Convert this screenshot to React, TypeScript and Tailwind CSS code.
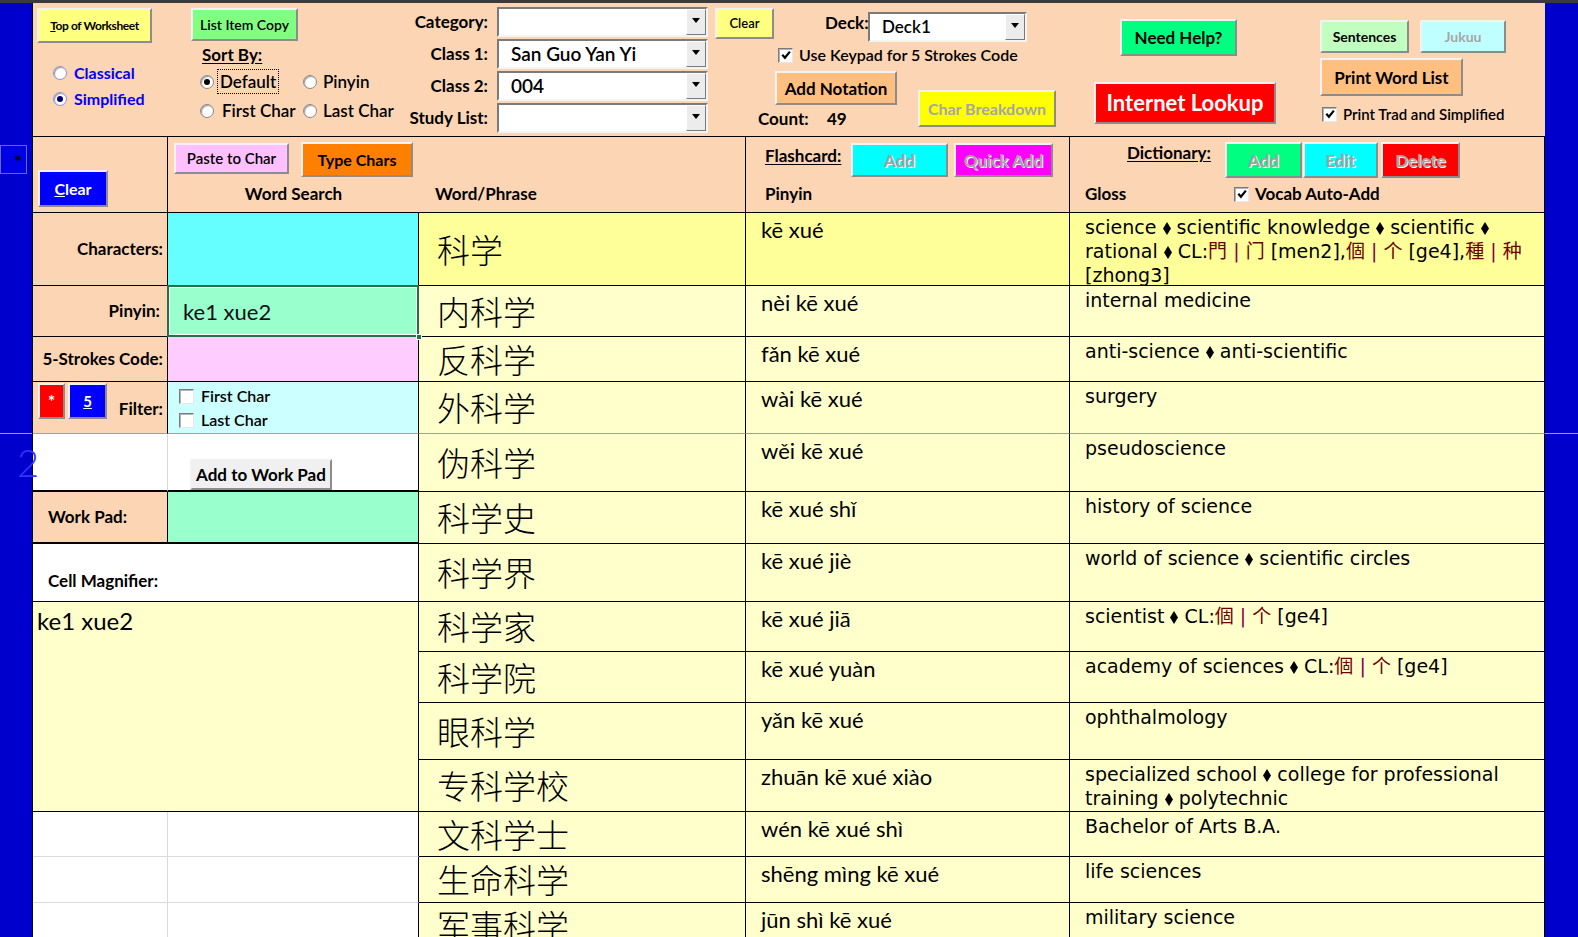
import React from 'react';

type BtnProps = { className?: string; children?: React.ReactNode };

function Btn({ className = '', children }: BtnProps) {
  return (
    <div
      className={`flex shrink-0 items-center justify-center whitespace-nowrap border-2 border-t-[#f2f2f2] border-l-[#f2f2f2] border-r-[#8c8c8c] border-b-[#8c8c8c] leading-none ${className}`}
    >
      {children}
    </div>
  );
}

function Radio({ on = false, blue = false }: { on?: boolean; blue?: boolean }) {
  return (
    <span
      className={`inline-flex h-[14px] w-[14px] shrink-0 items-center justify-center rounded-full border bg-white shadow-[inset_1px_1px_1px_rgba(0,0,0,0.4)] ${
        blue ? 'border-[#8f8fd8]' : 'border-[#8a8a8a]'
      }`}
    >
      {on && <span className={`h-[6px] w-[6px] rounded-full ${blue ? 'bg-[#00007a]' : 'bg-black'}`} />}
    </span>
  );
}

function Check({ on = false }: { on?: boolean }) {
  return (
    <span className="inline-flex h-[15px] w-[15px] shrink-0 items-center justify-center border border-t-[#7a7a7a] border-l-[#7a7a7a] border-r-[#e8e8e8] border-b-[#e8e8e8] bg-white shadow-[inset_1px_1px_0_#b4b4b4]">
      {on && (
        <svg width="10" height="10" viewBox="0 0 10 10">
          <path d="M1.3 4.8 L3.9 7.8 L8.9 1.6" fill="none" stroke="#000" strokeWidth="2.2" />
        </svg>
      )}
    </span>
  );
}

function Combo({ value = '', className = '', textClass = 'text-[19px]' }: { value?: string; className?: string; textClass?: string }) {
  return (
    <div className={`flex shrink-0 border-2 border-t-[#7a7a7a] border-l-[#7a7a7a] border-r-[#f4f4f4] border-b-[#f4f4f4] bg-white ${className}`}>
      <div className={`flex flex-1 items-center whitespace-nowrap pl-[12px] font-semibold ${textClass}`}>{value}</div>
      <div className="flex w-[20px] items-start justify-center border border-t-white border-l-white border-r-[#7a7a7a] border-b-[#7a7a7a] bg-[#ececec] pt-[8px]">
        <svg width="8" height="5" viewBox="0 0 8 5">
          <path d="M0 0H8L4 5Z" fill="#000" />
        </svg>
      </div>
    </div>
  );
}

function Diamond() {
  return (
    <svg width="8" height="13" viewBox="0 0 8 13" className="inline-block">
      <path d="M4 0L8 6.5L4 13L0 6.5Z" fill="#000" />
    </svg>
  );
}

function GlossLine({ text }: { text: string }) {
  const parts = text.split(/(♦|\||[\u4e00-\u9fff])/).filter((p) => p !== '');
  return (
    <div className="whitespace-nowrap">
      {parts.map((p, i) => {
        if (p === '♦') return <Diamond key={i} />;
        if (p === '|')
          return (
            <span key={i} className="text-[#800050]">
              |
            </span>
          );
        if (/[\u4e00-\u9fff]/.test(p))
          return (
            <span key={i} className="text-[#6e0000]">
              {p}
            </span>
          );
        return <span key={i}>{p}</span>;
      })}
    </div>
  );
}

type Row = { h: string; word: string; py: string; gloss: string[]; bb: string; bg: string };

const rows: Row[] = [
  {
    h: 'h-[73px]',
    word: '科学',
    py: 'kē xué',
    gloss: ['science ♦ scientific knowledge ♦ scientific ♦', 'rational ♦ CL:門 | 门 [men2],個 | 个 [ge4],種 | 种', '[zhong3]'],
    bb: 'border-b-black',
    bg: 'bg-[#FFFF99]',
  },
  { h: 'h-[51px]', word: '内科学', py: 'nèi kē xué', gloss: ['internal medicine'], bb: 'border-b-black', bg: 'bg-[#FFFFCC]' },
  { h: 'h-[45px]', word: '反科学', py: 'fǎn kē xué', gloss: ['anti-science ♦ anti-scientific'], bb: 'border-b-black', bg: 'bg-[#FFFFCC]' },
  { h: 'h-[52px]', word: '外科学', py: 'wài kē xué', gloss: ['surgery'], bb: 'border-b-[#a0a0a0]', bg: 'bg-[#FFFFCC]' },
  { h: 'h-[58px]', word: '伪科学', py: 'wěi kē xué', gloss: ['pseudoscience'], bb: 'border-b-black', bg: 'bg-[#FFFFCC]' },
  { h: 'h-[52px]', word: '科学史', py: 'kē xué shǐ', gloss: ['history of science'], bb: 'border-b-black', bg: 'bg-[#FFFFCC]' },
  { h: 'h-[58px]', word: '科学界', py: 'kē xué jiè', gloss: ['world of science ♦ scientific circles'], bb: 'border-b-black', bg: 'bg-[#FFFFCC]' },
  { h: 'h-[50px]', word: '科学家', py: 'kē xué jiā', gloss: ['scientist ♦ CL:個 | 个 [ge4]'], bb: 'border-b-black', bg: 'bg-[#FFFFCC]' },
  { h: 'h-[51px]', word: '科学院', py: 'kē xué yuàn', gloss: ['academy of sciences ♦ CL:個 | 个 [ge4]'], bb: 'border-b-black', bg: 'bg-[#FFFFCC]' },
  { h: 'h-[57px]', word: '眼科学', py: 'yǎn kē xué', gloss: ['ophthalmology'], bb: 'border-b-black', bg: 'bg-[#FFFFCC]' },
  {
    h: 'h-[52px]',
    word: '专科学校',
    py: 'zhuān kē xué xiào',
    gloss: ['specialized school ♦ college for professional', 'training ♦ polytechnic'],
    bb: 'border-b-black',
    bg: 'bg-[#FFFFCC]',
  },
  { h: 'h-[45px]', word: '文科学士', py: 'wén kē xué shì', gloss: ['Bachelor of Arts B.A.'], bb: 'border-b-black', bg: 'bg-[#FFFFCC]' },
  { h: 'h-[46px]', word: '生命科学', py: 'shēng mìng kē xué', gloss: ['life sciences'], bb: 'border-b-black', bg: 'bg-[#FFFFCC]' },
  { h: 'h-[46px]', word: '军事科学', py: 'jūn shì kē xué', gloss: ['military science'], bb: 'border-b-black', bg: 'bg-[#FFFFCC]' },
];

const disabledText = 'text-[#a3a3a3] [text-shadow:1px_1px_0_#ffffff]';

export default function App() {
  return (
    <div className="relative h-[937px] w-[1578px] overflow-hidden bg-white font-['Lato',sans-serif] text-black">
      <div className="h-[3px] bg-[#3a3a3a]" />
      <div className="flex">
        {/* left blue strip */}
        <div className="flex w-[33px] shrink-0 flex-col border-r border-black bg-[#0000CC]">
          <div className="h-[431px] border-b border-[#a0a0a0]">
            <div className="mt-[142px] flex h-[29px] w-[27px] items-start justify-end border border-[#6a6aa8] bg-[#0000E6] pr-[4px] pt-[6px] text-[19px] font-bold leading-none text-black">
              *
            </div>
          </div>
          <div className="flex-1">
            <div className="relative z-10 ml-[17px] mt-[9px] text-[38px] font-light leading-none text-[#3434FF]">2</div>
          </div>
        </div>

        {/* main */}
        <div className="flex w-[1512px] shrink-0 flex-col">
          {/* top band */}
          <div className="flex h-[134px] shrink-0 items-start border-b border-black bg-[#FCD5B4]">
            {/* col 1 */}
            <div className="ml-[4px] flex w-[115px] flex-col">
              <Btn className="mt-[5px] h-[35px] w-[115px] bg-[#FFFF80] text-[12px] font-bold tracking-[-0.4px]">
                <span>
                  <span className="underline">T</span>op of Worksheet
                </span>
              </Btn>
              <div className="mt-[17px] flex flex-col pl-[16px] text-[16px] font-bold text-[#0000FF]">
                <div className="flex h-[26px] items-center gap-[7px]">
                  <Radio blue />
                  Classical
                </div>
                <div className="flex h-[26px] items-center gap-[7px]">
                  <Radio blue on />
                  Simplified
                </div>
              </div>
            </div>
            {/* col 2 */}
            <div className="ml-[39px] flex w-[200px] flex-col">
              <Btn className="mt-[5px] h-[33px] w-[107px] bg-[#80FF80] text-[14px] font-semibold">List Item Copy</Btn>
              <div className="mt-[3px] h-[22px] pl-[11px] text-[17px] font-bold leading-[22px] underline underline-offset-2">Sort By:</div>
              <div className="mt-[1px] grid grid-cols-[103px_100px] grid-rows-[29px_29px] whitespace-nowrap pl-[9px] text-[17px] font-semibold">
                <div className="flex items-center gap-[3px]">
                  <Radio on />
                  <span className="border border-dotted border-black px-[2px] leading-[23px]">Default</span>
                </div>
                <div className="flex items-center gap-[6px]">
                  <Radio />
                  Pinyin
                </div>
                <div className="flex items-center gap-[8px]">
                  <Radio />
                  First Char
                </div>
                <div className="flex items-center gap-[6px]">
                  <Radio />
                  Last Char
                </div>
              </div>
            </div>
            {/* col 3 */}
            <div className="mt-[4px] flex flex-col gap-[2px]">
              {[
                ['Category:', ''],
                ['Class 1:', 'San Guo Yan Yi'],
                ['Class 2:', '004'],
                ['Study List:', ''],
              ].map(([l, v]) => (
                <div key={l} className="flex h-[30px] items-center">
                  <div className="w-[97px] whitespace-nowrap text-right text-[17px] font-bold">{l}</div>
                  <Combo value={v} className="ml-[9px] h-[30px] w-[211px]" />
                </div>
              ))}
            </div>
            {/* col 4 */}
            <div className="flex w-[348px] flex-col">
              <div className="flex items-start">
                <Btn className="ml-[7px] mt-[5px] h-[31px] w-[59px] bg-[#FFFF80] text-[13px] font-semibold">Clear</Btn>
                <div className="ml-[51px] mt-[10px] w-[43px] text-[17px] font-bold leading-[20px]">Deck:</div>
                <Combo value="Deck1" className="mt-[9px] h-[30px] w-[159px]" textClass="text-[17px]" />
              </div>
              <div className="ml-[70px] mt-[5px] flex h-[16px] items-center gap-[6px] whitespace-nowrap text-[16px] font-semibold">
                <Check on />
                Use Keypad for 5 Strokes Code
              </div>
              <div className="flex items-start">
                <div className="ml-[50px] flex w-[139px] flex-col">
                  <Btn className="ml-[17px] mt-[8px] h-[34px] w-[122px] bg-[#FFBF80] text-[17px] font-bold">Add Notation</Btn>
                  <div className="mt-[4px] flex h-[20px] items-center text-[17px] font-bold">
                    <span className="w-[69px]">Count:</span>
                    <span>49</span>
                  </div>
                </div>
                <Btn className="ml-[21px] mt-[27px] h-[37px] w-[138px] bg-[#FFFF00] text-[16px] font-bold text-[#a6a6a6]">Char Breakdown</Btn>
              </div>
            </div>
            {/* col 5 */}
            <div className="ml-[38px] flex w-[182px] flex-col">
              <Btn className="ml-[26px] mt-[16px] h-[37px] w-[117px] bg-[#00FF80] text-[17px] font-bold">Need Help?</Btn>
              <Btn className="mt-[26px] h-[42px] w-[182px] bg-[#FF0000] text-[22px] font-bold text-white">Internet Lookup</Btn>
            </div>
            {/* col 6 */}
            <div className="ml-[44px] flex flex-col">
              <div className="mt-[17px] flex">
                <Btn className="h-[33px] w-[89px] bg-[#C0FFC0] text-[14px] font-bold">Sentences</Btn>
                <Btn className="ml-[11px] h-[33px] w-[86px] bg-[#C0FFFF] text-[14px] font-bold text-[#a6a6a6]">Jukuu</Btn>
              </div>
              <Btn className="mt-[5px] h-[38px] w-[143px] bg-[#FFBF80] text-[17px] font-bold">Print Word List</Btn>
              <div className="ml-[2px] mt-[10px] flex h-[16px] items-center gap-[6px] whitespace-nowrap text-[15px] font-semibold">
                <Check on />
                Print Trad and Simplified
              </div>
            </div>
          </div>

          {/* header row */}
          <div className="flex h-[76px] shrink-0 bg-[#FCD5B4]">
            <div className="w-[135px] shrink-0 border-r border-b border-black">
              <Btn className="ml-[5px] mt-[33px] h-[37px] w-[70px] bg-[#0000FF] text-[16px] font-bold text-white">
                <span>
                  <span className="underline">C</span>lear
                </span>
              </Btn>
            </div>
            <div className="flex w-[251px] shrink-0 flex-col border-b border-black">
              <div className="flex h-[40px] items-start">
                <Btn className="ml-[6px] mt-[6px] h-[31px] w-[115px] bg-[#FFC0FF] text-[15px] font-semibold">Paste to Char</Btn>
                <Btn className="ml-[12px] mt-[5px] h-[35px] w-[112px] bg-[#FF8000] text-[16px] font-bold">Type Chars</Btn>
              </div>
              <div className="mt-[6px] text-center text-[17px] font-bold leading-[22px]">Word Search</div>
            </div>
            <div className="flex w-[327px] shrink-0 items-end border-r border-b border-black pb-[7px] pl-[16px] text-[17px] font-bold leading-[22px]">
              Word/Phrase
            </div>
            <div className="flex w-[324px] shrink-0 flex-col border-r border-b border-black pl-[19px]">
              <div className="mt-[6px] flex h-[34px] items-start">
                <div className="mt-[2px] w-[86px] text-[17px] font-bold leading-[22px] underline underline-offset-2">Flashcard:</div>
                <Btn className={`h-[34px] w-[97px] bg-[#00FFFF] text-[17px] font-bold ${disabledText}`}>Add</Btn>
                <Btn className={`ml-[6px] h-[34px] w-[99px] bg-[#FF00FF] text-[17px] font-bold ${disabledText}`}>Quick Add</Btn>
              </div>
              <div className="mt-[6px] text-[17px] font-bold leading-[22px]">Pinyin</div>
            </div>
            <div className="flex w-[475px] shrink-0 flex-col border-r border-b border-black">
              <div className="mt-[5px] flex h-[36px] items-start pl-[57px]">
                <div className="w-[98px] text-[17px] font-bold leading-[22px] underline underline-offset-2">Dictionary:</div>
                <Btn className={`h-[36px] w-[77px] bg-[#00FF80] text-[17px] font-bold ${disabledText}`}>Add</Btn>
                <Btn className={`ml-[1px] h-[36px] w-[75px] bg-[#00FFFF] text-[17px] font-bold ${disabledText}`}>Edit</Btn>
                <Btn className={`ml-[3px] h-[36px] w-[79px] bg-[#FF0000] text-[17px] font-bold ${disabledText}`}>Delete</Btn>
              </div>
              <div className="mt-[5px] flex h-[22px] items-center pl-[15px] text-[17px] font-bold">
                <div className="w-[149px]">Gloss</div>
                <Check on />
                <div className="ml-[6px]">Vocab Auto-Add</div>
              </div>
            </div>
          </div>

          {/* body */}
          <div className="flex">
            {/* left panel */}
            <div className="grid w-[386px] shrink-0 grid-cols-[135px_251px] grid-rows-[73px_51px_45px_52px_58px_52px_58px_50px_51px_57px_52px_45px_46px_46px] text-[17px] font-bold">
              <div className="flex items-center justify-end border-r border-b border-black bg-[#FCD5B4] pr-[4px]">Characters:</div>
              <div className="border-r border-b border-black bg-[#66FFFF]" />

              <div className="flex items-center justify-end border-r border-b border-black bg-[#FCD5B4] pr-[7px]">Pinyin:</div>
              <div className="relative border-r border-b border-black bg-[#99FFCC]">
                <div className="absolute -top-px -left-px -right-px -bottom-px border-2 border-[#217346] shadow-[inset_0_0_0_1px_#ffffff]" />
                <div className="absolute -right-[4px] -bottom-[4px] h-[6px] w-[6px] border border-white bg-[#217346]" />
                <div className="flex h-full items-center pl-[15px] text-[22px] font-normal text-[#111]">ke1 xue2</div>
              </div>

              <div className="flex items-center justify-end whitespace-nowrap border-r border-b border-black bg-[#FCD5B4] pr-[4px]">5-Strokes Code:</div>
              <div className="border-r border-b border-black bg-[#FFCCFF]" />

              <div className="flex items-start border-r border-b border-r-black border-b-[#a0a0a0] bg-[#FCD5B4]">
                <Btn className="ml-[5px] mt-[1px] h-[36px] w-[27px] bg-[#FF0000] text-[17px] font-bold text-white">*</Btn>
                <Btn className="ml-[3px] mt-[1px] h-[36px] w-[39px] bg-[#0000FF] text-[15px] font-bold text-white">
                  <span className="underline">5</span>
                </Btn>
                <div className="ml-auto mt-[16px] pr-[4px] leading-[22px]">Filter:</div>
              </div>
              <div className="flex flex-col border-r border-b border-r-black border-b-[#a0a0a0] bg-[#CCFFFF] pl-[11px] pt-[2px] text-[16px] font-semibold">
                <div className="flex h-[24px] items-center gap-[7px]">
                  <Check />
                  First Char
                </div>
                <div className="flex h-[24px] items-center gap-[7px]">
                  <Check />
                  Last Char
                </div>
              </div>

              <div className="border-r border-b-2 border-r-[#d9d9d9] border-b-black bg-white" />
              <div className="flex items-end border-r border-b-2 border-black bg-white pl-[22px]">
                <Btn className="h-[31px] w-[142px] bg-[#F0F0F0] text-[17px] font-bold">Add to Work Pad</Btn>
              </div>

              <div className="flex items-center border-r border-b-2 border-black bg-[#FCD5B4] pl-[15px]">Work Pad:</div>
              <div className="border-r border-b-2 border-black bg-[#99FFCC]" />

              <div className="col-span-2 flex items-end border-r border-b border-black bg-white pb-[9px] pl-[15px] leading-[22px]">Cell Magnifier:</div>

              <div className="col-span-2 row-span-4 border-r border-b border-black bg-[#FFFFCC] pl-[4px] pt-[4px] text-[24px] font-normal leading-[30px]">
                ke1 xue2
              </div>

              <div className="border-r border-b border-[#dadada] bg-white" />
              <div className="border-r border-b border-r-black border-b-[#dadada] bg-white" />
              <div className="border-r border-b border-[#dadada] bg-white" />
              <div className="border-r border-b border-r-black border-b-[#dadada] bg-white" />
              <div className="border-r border-b border-[#dadada] bg-white" />
              <div className="border-r border-b border-r-black border-b-[#dadada] bg-white" />
            </div>

            {/* word table */}
            <div className="flex w-[1126px] shrink-0 flex-col">
              {rows.map((r) => (
                <div key={r.word} className={`flex shrink-0 ${r.h} ${r.bg}`}>
                  <div
                    className={`flex w-[327px] shrink-0 items-center border-r border-b border-r-black ${r.bb} pl-[18px] font-['Noto_Sans_CJK_SC',sans-serif] text-[33px] font-light leading-none`}
                  >
                    {r.word}
                  </div>
                  <div className={`w-[324px] shrink-0 border-r border-b border-r-black ${r.bb} pl-[15px] pt-[3px] text-[22px] leading-[28px]`}>{r.py}</div>
                  <div
                    className={`w-[475px] shrink-0 overflow-hidden border-r border-b border-r-black ${r.bb} pl-[15px] pt-[2px] font-['DejaVu_Sans','Noto_Sans_CJK_SC',sans-serif] text-[19px] leading-[24px]`}
                  >
                    {r.gloss.map((g, i) => (
                      <GlossLine key={i} text={g} />
                    ))}
                  </div>
                </div>
              ))}
            </div>
          </div>
        </div>

        {/* right blue strip */}
        <div className="flex flex-1 flex-col bg-[#0000CC]">
          <div className="h-[431px] border-b border-[#a0a0a0]" />
          <div className="flex-1" />
        </div>
      </div>
    </div>
  );
}
